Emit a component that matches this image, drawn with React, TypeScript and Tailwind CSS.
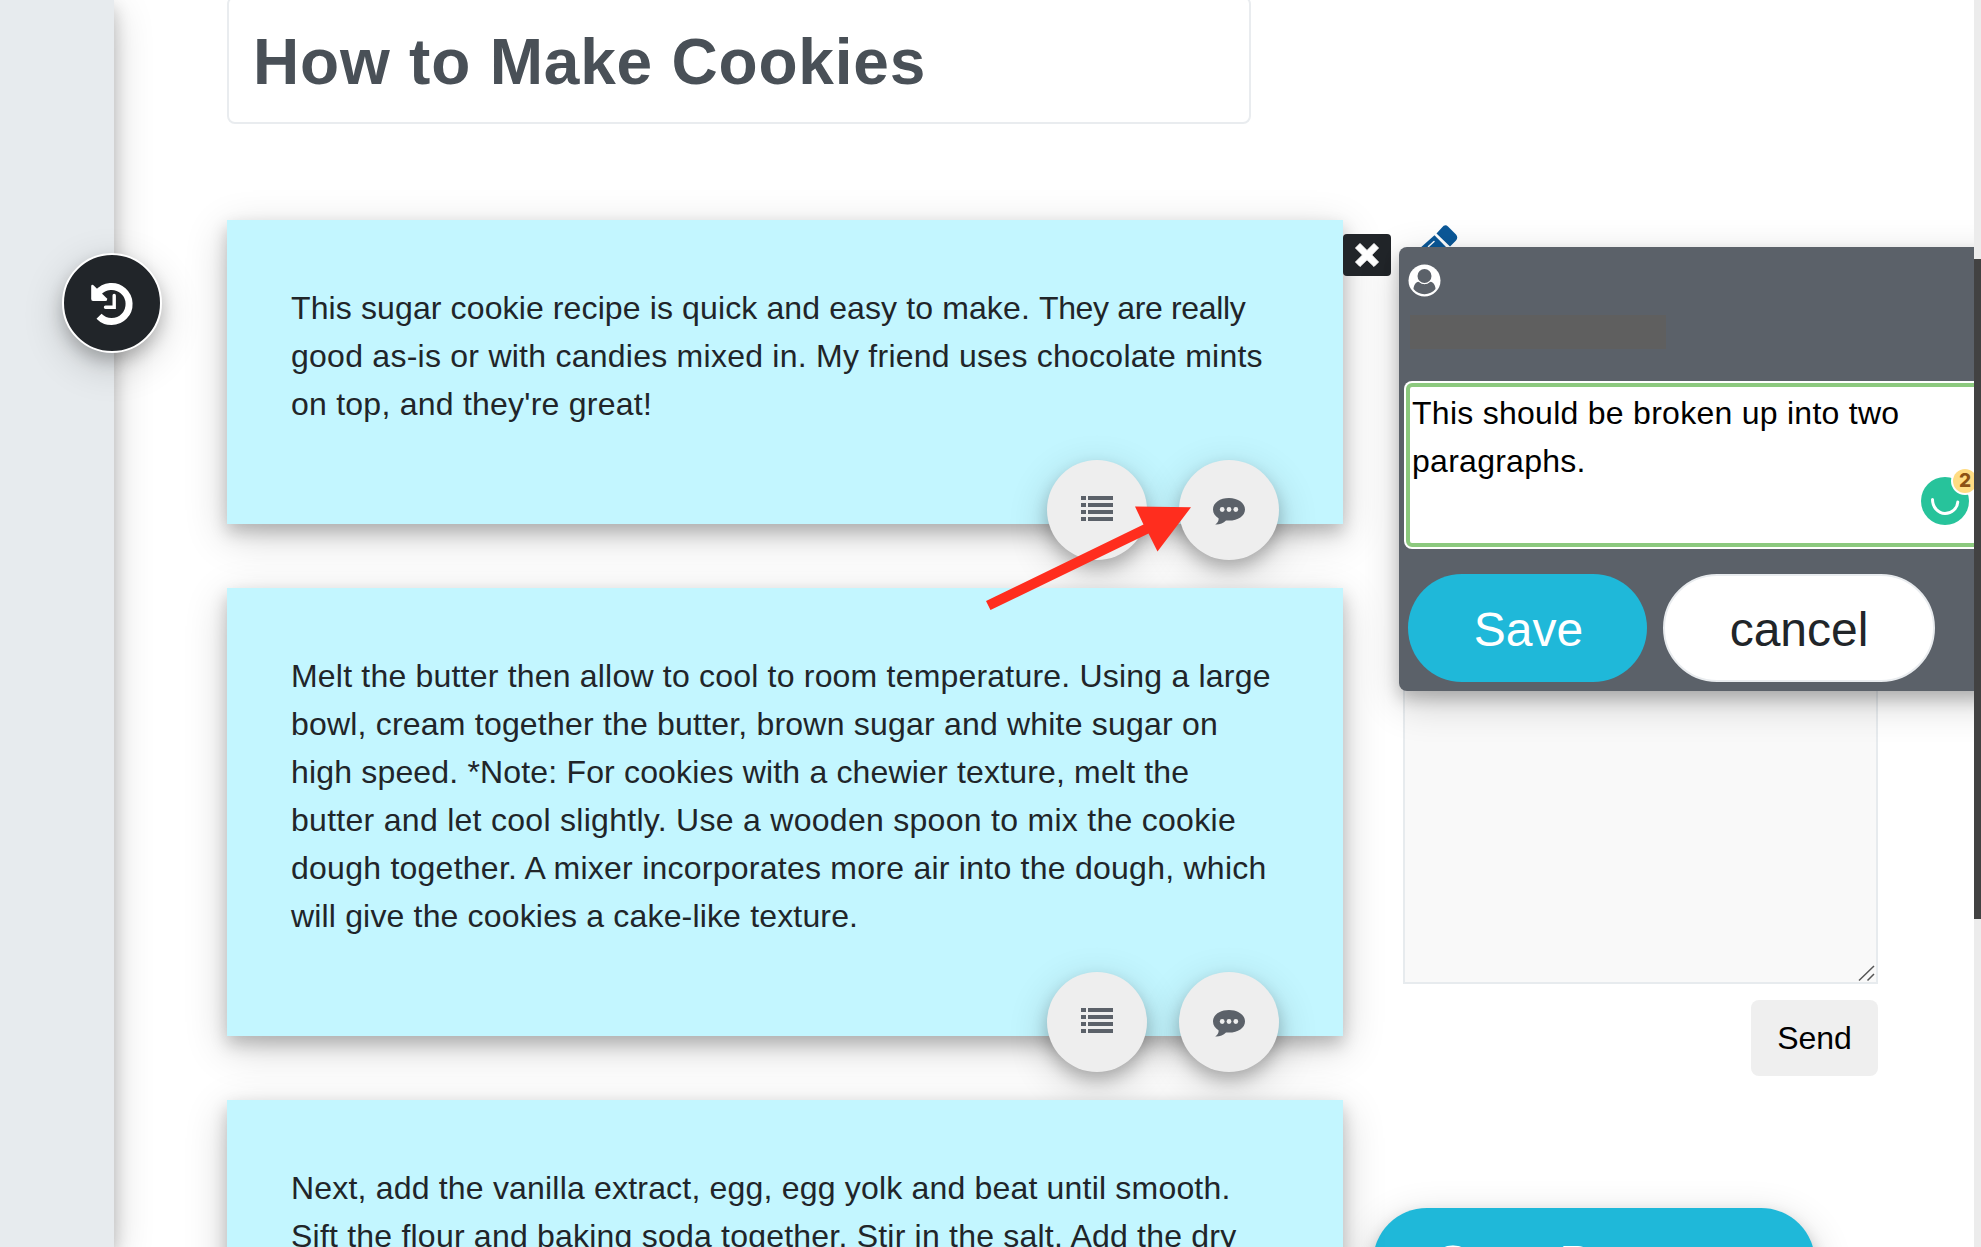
import React from "react";

const SHADOW = "shadow-[0_8px_16px_0_rgba(0,0,0,0.2),0_12px_40px_0_rgba(0,0,0,0.19)]";

type Run = { text: string; spacing: string };

const PARAGRAPHS: Run[][][] = [
  [
    [
      { text: "This sugar cookie recipe is quick and easy to make. ", spacing: "tracking-[0.12px]" },
      { text: "They are really", spacing: "tracking-[-0.35px]" },
    ],
    [{ text: "good as-is or with candies mixed in. My friend uses chocolate mints", spacing: "tracking-[0.25px]" }],
    [{ text: "on top, and they're great!", spacing: "tracking-[0.24px]" }],
  ],
  [
    [{ text: "Melt the butter then allow to cool to room temperature. Using a large", spacing: "tracking-[0.2px]" }],
    [{ text: "bowl, cream together the butter, brown sugar and white sugar on", spacing: "tracking-[0.2px]" }],
    [{ text: "high speed. *Note: For cookies with a chewier texture, melt the", spacing: "tracking-[0.17px]" }],
    [{ text: "butter and let cool slightly. Use a wooden spoon to mix the cookie", spacing: "tracking-[0.285px]" }],
    [{ text: "dough together. A mixer incorporates more air into the dough, which", spacing: "tracking-[0.25px]" }],
    [{ text: "will give the cookies a cake-like texture.", spacing: "tracking-[0.165px]" }],
  ],
  [
    [{ text: "Next, add the vanilla extract, egg, egg yolk and beat until smooth.", spacing: "tracking-[0.19px]" }],
    [{ text: "Sift the flour and baking soda together. Stir in the salt. Add the dry", spacing: "tracking-[0.215px]" }],
  ],
];

function ListIcon() {
  return (
    <svg width="32" height="25" viewBox="0 0 32 25" fill="#5b6169" className="mt-[-3px]">
      {[0, 7, 14, 21].map((y) => (
        <g key={y}>
          <rect x="0" y={y} width="5" height="4" />
          <rect x="7" y={y} width="25" height="4" />
        </g>
      ))}
    </svg>
  );
}

function CommentIcon() {
  return (
    <svg width="32" height="27" viewBox="0 0 32 27" fill="#5b6169" className="mt-[3px]">
      <path d="M16 0C7 0 0 4.800 0 11.400c0 3.700 2.200 6.700 5.500 8.800.6 2.500-1.300 4.600-3.300 6.300 4.200.3 8-1.200 10.800-4.100 1 .1 2 .2 3 .2 9 0 16-4.800 16-11.200S25 0 16 0Z" />
      <circle cx="9.200" cy="11.500" r="2.400" fill="#eee" />
      <circle cx="16" cy="11.500" r="2.400" fill="#eee" />
      <circle cx="22.800" cy="11.500" r="2.400" fill="#eee" />
    </svg>
  );
}

function RoundButton({ label, children }: { label: string; children: React.ReactNode }) {
  return (
    <button
      aria-label={label}
      className={`flex size-[100px] items-center justify-center rounded-full bg-[#eeeeee] ${SHADOW}`}
    >
      {children}
    </button>
  );
}

function Card({ lines }: { lines: Run[][] }) {
  return (
    <section className={`relative bg-[#c3f6ff] px-16 pt-16 pb-24 text-[#212529] ${SHADOW}`}>
      {lines.map((runs) => (
        <p key={runs[0].text} className="h-12 whitespace-pre text-[32px] leading-[48px]">
          {runs.map((r) => (
            <span key={r.text} className={r.spacing}>{r.text}</span>
          ))}
        </p>
      ))}
      <div className="absolute right-16 bottom-[-36px] flex gap-8">
        <RoundButton label="Versions"><ListIcon /></RoundButton>
        <RoundButton label="Comment"><CommentIcon /></RoundButton>
      </div>
    </section>
  );
}

function CommentPopover() {
  return (
    <div className={`absolute left-[1399px] top-[247px] h-[444px] w-[610px] rounded-[8px] bg-[#5b6169] pt-[17px] ${SHADOW}`}>
      <svg width="34" height="34" viewBox="0 0 34 34" className="ml-[9px]">
        <circle cx="16.500" cy="16.500" r="16" fill="#fff" />
        <path d="M8.500 18.500c1.700-1.200 2.800-.6 4 .6 2.500 1.500 5.500 1.500 8 0 1.200-1.200 2.300-1.800 4-.6 2 1.500 3 4 3 6.500-2.700 3.300-6.500 5.200-11 5.200S8.200 28.300 5.500 25c0-2.500 1-5 3-6.500Z" fill="#5b6169" />
        <circle cx="16.500" cy="12" r="8" fill="#fff" />
        <circle cx="16.500" cy="12" r="7" fill="#5b6169" />
      </svg>
      <div className="ml-[11px] mt-[17px] h-[34px] w-[256px] bg-[#5f5f5f]" />
      <div className="ml-[5px] mt-8 h-[168px] w-[640px] rounded-[8px] bg-white p-0.5">
        <div className="h-[164px] rounded-[6px] border-4 border-[#8cc97e] bg-white pl-0.5 pt-0.5 text-[32px] leading-[48px] tracking-[0.27px] text-black">
          <p className="whitespace-nowrap">This should be broken up into two</p>
          <p className="whitespace-nowrap">paragraphs.</p>
        </div>
      </div>
      <div className="absolute left-[522px] top-[220px]">
        <svg width="60" height="60" viewBox="0 0 60 60">
          <circle cx="24" cy="34" r="24" fill="#27c39b" />
          <path d="M11.500 32.500C11.500 40 17 46.500 24 46.500S36.500 41 36.800 35" fill="none" stroke="#fff" strokeWidth="3" strokeLinecap="round" />
          <circle cx="44" cy="14" r="14" fill="#fff" />
          <circle cx="44" cy="14" r="12" fill="#ffdc83" />
        </svg>
        <span className="absolute left-[32px] top-0 w-6 text-center font-[Inter] text-[19px] font-extrabold leading-[27px] text-[#8c5214]">2</span>
      </div>
      <div className="ml-[9px] mt-[25px] flex gap-4 text-[48px]">
        <button className="h-[108px] w-[239px] rounded-full bg-[#1fb8d9] pl-0.5 pt-1 text-white">Save</button>
        <button className="h-[108px] w-[272px] rounded-full border-2 border-[#e9ecef] bg-white pt-1 text-[#212529]">cancel</button>
      </div>
    </div>
  );
}

export default function App() {
  return (
    <div className="relative flex h-[1247px] w-[1981px] overflow-hidden bg-white font-['Liberation_Sans',Arial,sans-serif]">
      <aside className={`h-full w-[114px] shrink-0 bg-[#e7ebee] ${SHADOW}`} />

      <main className="ml-[113px] w-[1116px] shrink-0">
        <h1 className="mt-[-4px] flex h-32 w-[1024px] items-center rounded-[8px] border-2 border-[#e9ecef] pl-6 pt-1 text-[64px] font-bold tracking-[0.8px] text-[#495057]">
          How to Make Cookies
        </h1>
        <div className="mt-24 flex flex-col gap-16">
          {PARAGRAPHS.map((lines) => (
            <Card key={lines[0][0].text} lines={lines} />
          ))}
        </div>
      </main>

      <div className="ml-[60px] flex w-[475px] shrink-0 flex-col items-end">
        <svg width="40" height="40" viewBox="0 0 40 40" className="ml-[16px] mt-[224px] shrink-0 self-start">
          <path d="M15.500 11.300 28 24 20 38H0V25Z" fill="#0b5898" />
          <path d="M17.500 9.500 23 3.500Q26-.5 29 2.500L37 10.500Q39.500 13.500 37 16.500L31 22.500Z" fill="#0b5898" />
          <path d="M9.500 22.500 15 17.500" stroke="#fff" strokeWidth="1.500" strokeLinecap="round" />
        </svg>
        <div className="flex h-[720px] w-full shrink-0 items-end justify-end border-2 border-[#e7ebee] bg-[#f9f9f9]">
          <svg width="18" height="18" viewBox="0 0 18 18" stroke="#555" strokeWidth="1.500">
            <path d="M1 16.500 16 2M9.500 16.500 16 10" />
          </svg>
        </div>
        <button className="mt-4 h-[76px] w-[127px] shrink-0 rounded-[8px] bg-[#efefef] text-[32px] text-black">Send</button>
        <button className={`mr-[63px] mt-[132px] h-[108px] w-[442px] shrink-0 rounded-full bg-[#1fb8d9] pt-0.5 text-[48px] text-white ${SHADOW}`}>
          Save Progress
        </button>
      </div>

      <button aria-label="History" className={`absolute left-[62px] top-[253px] size-[100px] rounded-full border-2 border-white bg-[#212529] ${SHADOW}`}>
        <svg width="96" height="96" viewBox="64 255 96 96">
          <path d="M99 316.200A17.500 17.500 0 1 0 98 293" fill="none" stroke="#fff" strokeWidth="7" />
          <path d="M91.200 286Q91.500 284 93.200 285L107 298.500Q107.500 301 105.500 301H93Q91.200 301 91.200 299Z" fill="#fff" />
          <path d="M114.200 295.500V307.300H105.500" fill="none" stroke="#fff" strokeWidth="3.400" strokeLinecap="round" />
        </svg>
      </button>

      <button aria-label="Close" className="absolute left-[1343px] top-[234px] flex h-[42px] w-12 items-center justify-center rounded-[4px] bg-[#212529]">
        <svg width="24" height="24" viewBox="0 0 24 24">
          <path d="M5 0.500 12 7.500 19 0.500 23.500 5 16.700 12 23.500 19 19 23.500 12 16.700 5 23.500 0.500 19 7.500 12 0.500 5Z" fill="#fff" stroke="#fff" strokeLinejoin="round" />
        </svg>
      </button>

      <CommentPopover />

      <svg className="pointer-events-none absolute left-[980px] top-[500px]" width="220" height="120" viewBox="980 500 220 120">
        <path d="M986 601 1143.500 524.500 1135 506.500 1191 507.300 1157.500 551.500 1148.500 533.500 990.500 610Z" fill="#ff2d1e" />
      </svg>

      <div className="absolute right-0 top-0 h-full w-[7px] bg-[#ececec] pt-[259px]">
        <div className="h-[660px] bg-[#424242]" />
      </div>
    </div>
  );
}
